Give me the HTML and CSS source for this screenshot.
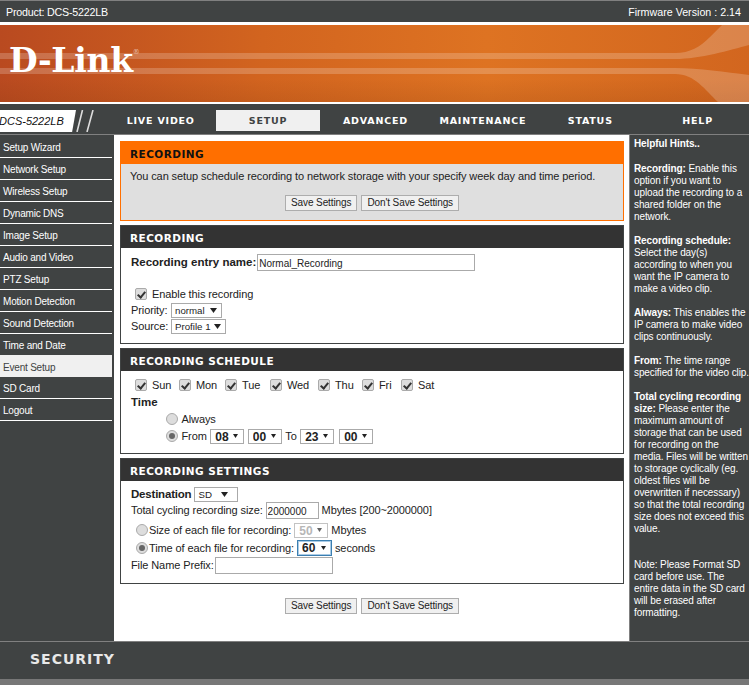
FILE: index.html
```html
<!DOCTYPE html>
<html lang="en">
<head>
    <meta charset="UTF-8">
    <meta name="viewport" content="width=device-width, initial-scale=1.0">
    <title>D-Link DCS-5222LB - Event Setup</title>
    <link rel="stylesheet" href="styles.css">
</head>
<body>
    <div class="topbar">
        <span class="product">Product: DCS-5222LB</span>
        <span>Firmware Version : 2.14</span>
    </div>

    <div class="banner">
        <svg class="banner-lines" viewBox="0 0 749 77" preserveAspectRatio="none">
            <path d="M0 28H675C690 28 700 22 710 12L722 0H749V20C730 25 700 34 675 34H0Z" fill="#fff" fill-opacity="0.2"/>
            <path d="M0 43H675C700 43 725 47 749 50V77H718C705 65 695 49 675 49H0Z" fill="#fff" fill-opacity="0.2"/>
        </svg>
        <div class="logo">D-Link<sup>®</sup></div>
    </div>

    <div class="nav">
        <div class="model">
            <div class="model-name">DCS-5222LB</div>
            <svg class="model-slashes" width="24" height="22" viewBox="0 0 24 22">
                <path d="M6.5 0L1 22M17 0L11 22" stroke="#ddd" stroke-width="1.6" fill="none"/>
            </svg>
        </div>
        <a class="tab">LIVE VIDEO</a>
        <a class="tab active">SETUP</a>
        <a class="tab">ADVANCED</a>
        <a class="tab">MAINTENANCE</a>
        <a class="tab">STATUS</a>
        <a class="tab">HELP</a>
    </div>

    <div class="main">
        <div class="sidebar">
            <a class="side-item">Setup Wizard</a>
            <a class="side-item">Network Setup</a>
            <a class="side-item">Wireless Setup</a>
            <a class="side-item">Dynamic DNS</a>
            <a class="side-item">Image Setup</a>
            <a class="side-item">Audio and Video</a>
            <a class="side-item">PTZ Setup</a>
            <a class="side-item">Motion Detection</a>
            <a class="side-item">Sound Detection</a>
            <a class="side-item">Time and Date</a>
            <a class="side-item current">Event Setup</a>
            <a class="side-item">SD Card</a>
            <a class="side-item">Logout</a>
        </div>

        <div class="content">
            <div class="panel panel-intro">
                <h2>RECORDING</h2>
                <div class="intro-body">
                    <p>You can setup schedule recording to network storage with your specify week day and time period.</p>
                    <div class="buttons">
                        <button class="btn">Save Settings</button>
                        <button class="btn">Don't Save Settings</button>
                    </div>
                </div>
            </div>

            <div class="panel panel-recording">
                <h2>RECORDING</h2>
                <div class="panel-body">
                    <div class="row name-row">
                        <b>Recording entry name:</b>
                        <input class="text name-input" type="text" value="Normal_Recording">
                    </div>
                    <label class="row enable-row"><input class="check" type="checkbox" checked> Enable this recording</label>
                    <div class="row"><span class="field">Priority:</span> <select class="pick pick-priority"><option>normal</option></select></div>
                    <div class="row"><span class="field">Source:</span> <select class="pick pick-source"><option>Profile 1</option></select></div>
                </div>
            </div>

            <div class="panel panel-schedule">
                <h2>RECORDING SCHEDULE</h2>
                <div class="panel-body">
                    <div class="row days">
                        <label class="day day-sun"><input class="check" type="checkbox" checked> Sun</label>
                        <label class="day day-mon"><input class="check" type="checkbox" checked> Mon</label>
                        <label class="day day-tue"><input class="check" type="checkbox" checked> Tue</label>
                        <label class="day day-wed"><input class="check" type="checkbox" checked> Wed</label>
                        <label class="day day-thu"><input class="check" type="checkbox" checked> Thu</label>
                        <label class="day day-fri"><input class="check" type="checkbox" checked> Fri</label>
                        <label class="day"><input class="check" type="checkbox" checked> Sat</label>
                    </div>
                    <div class="row time-title"><b>Time</b></div>
                    <label class="row time-row"><input class="radio" type="radio" name="time"> Always</label>
                    <div class="row time-row">
                        <input class="radio" type="radio" name="time" checked> From
                        <select class="pick pick-time"><option>08</option></select>
                        <select class="pick pick-time"><option>00</option></select>
                        To
                        <select class="pick pick-time"><option>23</option></select>
                        <select class="pick pick-time pick-last"><option>00</option></select>
                    </div>
                </div>
            </div>

            <div class="panel panel-settings">
                <h2>RECORDING SETTINGS</h2>
                <div class="panel-body">
                    <div class="row dest-row"><b>Destination</b> <select class="pick pick-dest"><option>SD</option></select></div>
                    <div class="row">Total cycling recording size: <input class="text size-input" type="text" value="2000000"> Mbytes [200~2000000]</div>
                    <div class="row file-row first-file"><input class="radio" type="radio" name="each"> Size of each file for recording: <select class="pick pick-time" disabled><option>50</option></select> Mbytes</div>
                    <div class="row file-row"><input class="radio" type="radio" name="each" checked> Time of each file for recording: <select class="pick pick-time focused"><option>60</option></select> seconds</div>
                    <div class="row">File Name Prefix: <input class="text prefix-input" type="text"></div>
                </div>
            </div>

            <div class="buttons bottom-buttons">
                <button class="btn">Save Settings</button>
                <button class="btn">Don't Save Settings</button>
            </div>
        </div>

        <div class="hints">
            <p class="hints-title"><b>Helpful Hints..</b></p>
            <p><b>Recording:</b> Enable this<br>option if you want to<br>upload the recording to a<br>shared folder on the<br>network.</p>
            <p><b>Recording schedule:</b><br>Select the day(s)<br>according to when you<br>want the IP camera to<br>make a video clip.</p>
            <p><b>Always:</b> This enables the<br>IP camera to make video<br>clips continuously.</p>
            <p><b>From:</b> The time range<br>specified for the video clip.</p>
            <p><b>Total cycling recording<br>size:</b> Please enter the<br>maximum amount of<br>storage that can be used<br>for recording on the<br>media. Files will be written<br>to storage cyclically (eg.<br>oldest files will be<br>overwritten if necessary)<br>so that the total recording<br>size does not exceed this<br>value.</p>
            <p class="note">Note: Please Format SD<br>card before use. The<br>entire data in the SD card<br>will be erased after<br>formatting.</p>
        </div>
    </div>

    <div class="footer">SECURITY</div>
    <div class="footer-strip"></div>
</body>
</html>
```

FILE: styles.css
```css
* {
    margin: 0;
    padding: 0;
    box-sizing: border-box;
    font-family: "Liberation Sans", Arial, sans-serif;
}

html, body {
    height: 685px;
    overflow: hidden;
}

body {
    background: #404343;
    font-size: 11px;
    color: #222;
}

.topbar {
    height: 22px;
    border-top: 1px solid #808080;
    background: #404343;
    color: #fff;
    display: flex;
    justify-content: space-between;
    align-items: center;
    padding: 0 8px 0 6px;
    font-size: 10.7px;
}

.product {
    letter-spacing: -0.2px;
}

.banner {
    position: relative;
    height: 82px;
    background: linear-gradient(to bottom, transparent 70%, rgba(120,50,10,0.15)), linear-gradient(to right, #b94a20, #d2641f 35%, #de7322 65%, #d2661f);
    border-top: 3px solid #fff;
    border-bottom: 2px solid #fff;
}

.banner-lines {
    position: absolute;
    left: 0;
    top: 0;
    width: 100%;
    height: 100%;
}

.logo {
    position: absolute;
    left: 9px;
    top: 16px;
    color: #fff;
    font-family: "DejaVu Serif", serif;
    font-size: 33px;
    font-weight: bold;
    letter-spacing: -0.3px;
}

.logo sup {
    font-size: 7px;
    font-family: inherit;
    font-weight: normal;
    vertical-align: 18px;
    opacity: 0.6;
}

.nav {
    height: 31px;
    display: grid;
    grid-template-columns: 107px repeat(6, 107.4px);
    align-items: end;
    padding-bottom: 2px;
    border-bottom: 1px solid #808080;
}

.model {
    position: relative;
    height: 22px;
}

.model-name {
    width: 78px;
    height: 22px;
    margin-left: -2px;
    padding-left: 1px;
    background: #fff;
    color: #111;
    font-size: 11px;
    font-style: italic;
    line-height: 23px;
    clip-path: polygon(0 0, 100% 0, 95% 100%, 0 100%);
    white-space: nowrap;
}

.model-slashes {
    position: absolute;
    left: 76px;
    top: 0;
}

.tab {
    height: 21px;
    margin: 0 1.7px 1px;
    color: #fff;
    text-align: center;
    line-height: 22px;
    font-family: "DejaVu Sans", sans-serif;
    font-size: 9.5px;
    font-weight: bold;
    letter-spacing: 0.8px;
}

.tab.active {
    background: #f0f0f0;
    color: #404343;
}

.main {
    height: 506px;
    display: grid;
    grid-template-columns: 114px 516px 119px;
}

.sidebar {
    padding: 1px 2px 0 0;
}

.side-item {
    display: block;
    height: 22px;
    padding-left: 3px;
    border-bottom: 1px solid #fff;
    color: #fff;
    line-height: 23px;
    font-size: 10px;
    letter-spacing: -0.2px;
}

.side-item.current {
    margin-top: -1px;
    background: #f0f0f0;
    color: #404343;
    border-bottom: 0;
    line-height: 26px;
}

.content {
    background: #fff;
    padding: 6px 5px 0 6px;
    border-right: 1px solid #808080;
}

.panel {
    border: 1px solid #404343;
    margin-bottom: 4px;
}

.panel h2 {
    height: 22px;
    padding-left: 9px;
    background: #333;
    color: #fff;
    line-height: 24px;
    font-family: "DejaVu Sans", sans-serif;
    font-size: 10.5px;
    font-weight: bold;
    letter-spacing: 0.45px;
}

.panel-intro {
    height: 80px;
    border-color: #ff6f00;
    background: #dfdfdf;
}

.panel-intro h2 {
    background: #ff6f00;
    color: #111;
}

.intro-body {
    padding: 5px 9px 0;
    font-size: 11px;
    letter-spacing: -0.1px;
    line-height: 14px;
}

.buttons {
    display: flex;
    justify-content: center;
    gap: 4px;
}

.intro-body .buttons {
    margin-top: 12px;
}

.bottom-buttons {
    margin-top: 14px;
}

.btn {
    height: 16px;
    padding: 0 5px;
    background: #f0f0f0;
    border: 1px solid #adadad;
    color: #222;
    font-size: 10px;
    letter-spacing: -0.1px;
    line-height: 14px;
}

.panel-recording {
    height: 119px;
}

.panel-schedule {
    height: 106px;
}

.panel-settings {
    height: 126px;
}

.panel-body {
    padding: 0 10px;
    font-size: 11px;
    letter-spacing: -0.1px;
}

.panel-body b {
    font-size: 11.5px;
    letter-spacing: 0;
}

.row {
    display: flex;
    align-items: center;
    gap: 3px;
    height: 16px;
    white-space: nowrap;
}

.field {
    width: 37px;
}

.name-row {
    margin-top: 6px;
    gap: 1px;
}

.enable-row {
    margin-top: 16px;
    padding-left: 4px;
    gap: 5px;
}

.days {
    margin-top: 6px;
    padding-left: 4px;
    gap: 0;
}

.day {
    display: flex;
    align-items: center;
    gap: 5px;
}

.day-sun { width: 44px; }
.day-mon { width: 46px; }
.day-tue { width: 45px; }
.day-wed { width: 48px; }
.day-thu { width: 44px; }
.day-fri { width: 39px; }

.time-title {
    height: 17px;
}

.time-row {
    padding-left: 35px;
    margin-top: 1px;
    gap: 3.5px;
}

.pick-last {
    margin-left: 1.5px;
}

.dest-row {
    margin-top: 5px;
}

.panel-body .dest-row b {
    letter-spacing: -0.2px;
}

.file-row {
    height: 18px;
    padding-left: 5px;
}

.file-row .radio {
    margin-right: -2px;
}

.first-file {
    margin-top: 3px;
}

.check, .radio {
    appearance: none;
    flex: none;
    width: 12px;
    height: 12px;
    border: 1px solid #aaa;
    background: #ddd;
    position: relative;
}

.check {
    border-radius: 2px;
}

.check:checked::after {
    content: "";
    position: absolute;
    left: 3px;
    top: 1px;
    width: 3px;
    height: 6px;
    border: solid #333;
    border-width: 0 2px 2px 0;
    transform: rotate(40deg);
}

.radio {
    border-radius: 50%;
}

.radio:checked::after {
    content: "";
    position: absolute;
    left: 2px;
    top: 2px;
    width: 6px;
    height: 6px;
    border-radius: 50%;
    background: #666;
}

.text {
    height: 17px;
    padding: 2px 1px 0;
    border: 1px solid #aaa;
    color: #222;
    font-size: 10px;
    outline: 0;
}

.name-input {
    width: 218px;
}

.size-input {
    width: 53px;
}

.prefix-input {
    width: 118px;
    margin-left: -2px;
}

.pick {
    appearance: none;
    height: 15px;
    padding-left: 3px;
    border: 1px solid #aaa;
    border-radius: 0;
    background: #fff url("data:image/svg+xml,%3Csvg xmlns='http://www.w3.org/2000/svg' width='7' height='5'%3E%3Cpath d='M0 0H7L3.5 5Z' fill='%23222'/%3E%3C/svg%3E") no-repeat right 4px center;
    color: #222;
    font-size: 9.7px;
}

.pick-priority {
    width: 51px;
}

.pick-source {
    width: 55px;
}

.pick-dest {
    width: 44px;
    background-position: right 9px center;
}

.pick-time {
    width: 34px;
    height: 15px;
    padding-left: 4px;
    background-size: 5px 4px;
    background-position: right 5px center;
    font-size: 12px;
    font-weight: bold;
}

.pick:disabled {
    color: #999;
    opacity: 0.7;
}

.pick.focused {
    width: 35px;
    height: 16px;
    border: 1px solid #3c7fb1;
    box-shadow: inset 0 0 0 1px #a9cbe6;
}

.hints {
    padding: 3px 0 0 4px;
    color: #fff;
    font-size: 10px;
    letter-spacing: -0.1px;
    line-height: 12px;
    white-space: nowrap;
}

.hints p {
    margin-bottom: 12px;
}

.hints .hints-title {
    margin-bottom: 13px;
}

.hints .note {
    margin-top: 24px;
}

.footer {
    height: 38px;
    padding-left: 30px;
    border-top: 1px solid #808080;
    color: #e8e8e8;
    line-height: 34px;
    font-family: "DejaVu Sans", sans-serif;
    font-size: 14px;
    font-weight: bold;
    letter-spacing: 1px;
}

.footer-strip {
    height: 6px;
    background: #777;
}
```
